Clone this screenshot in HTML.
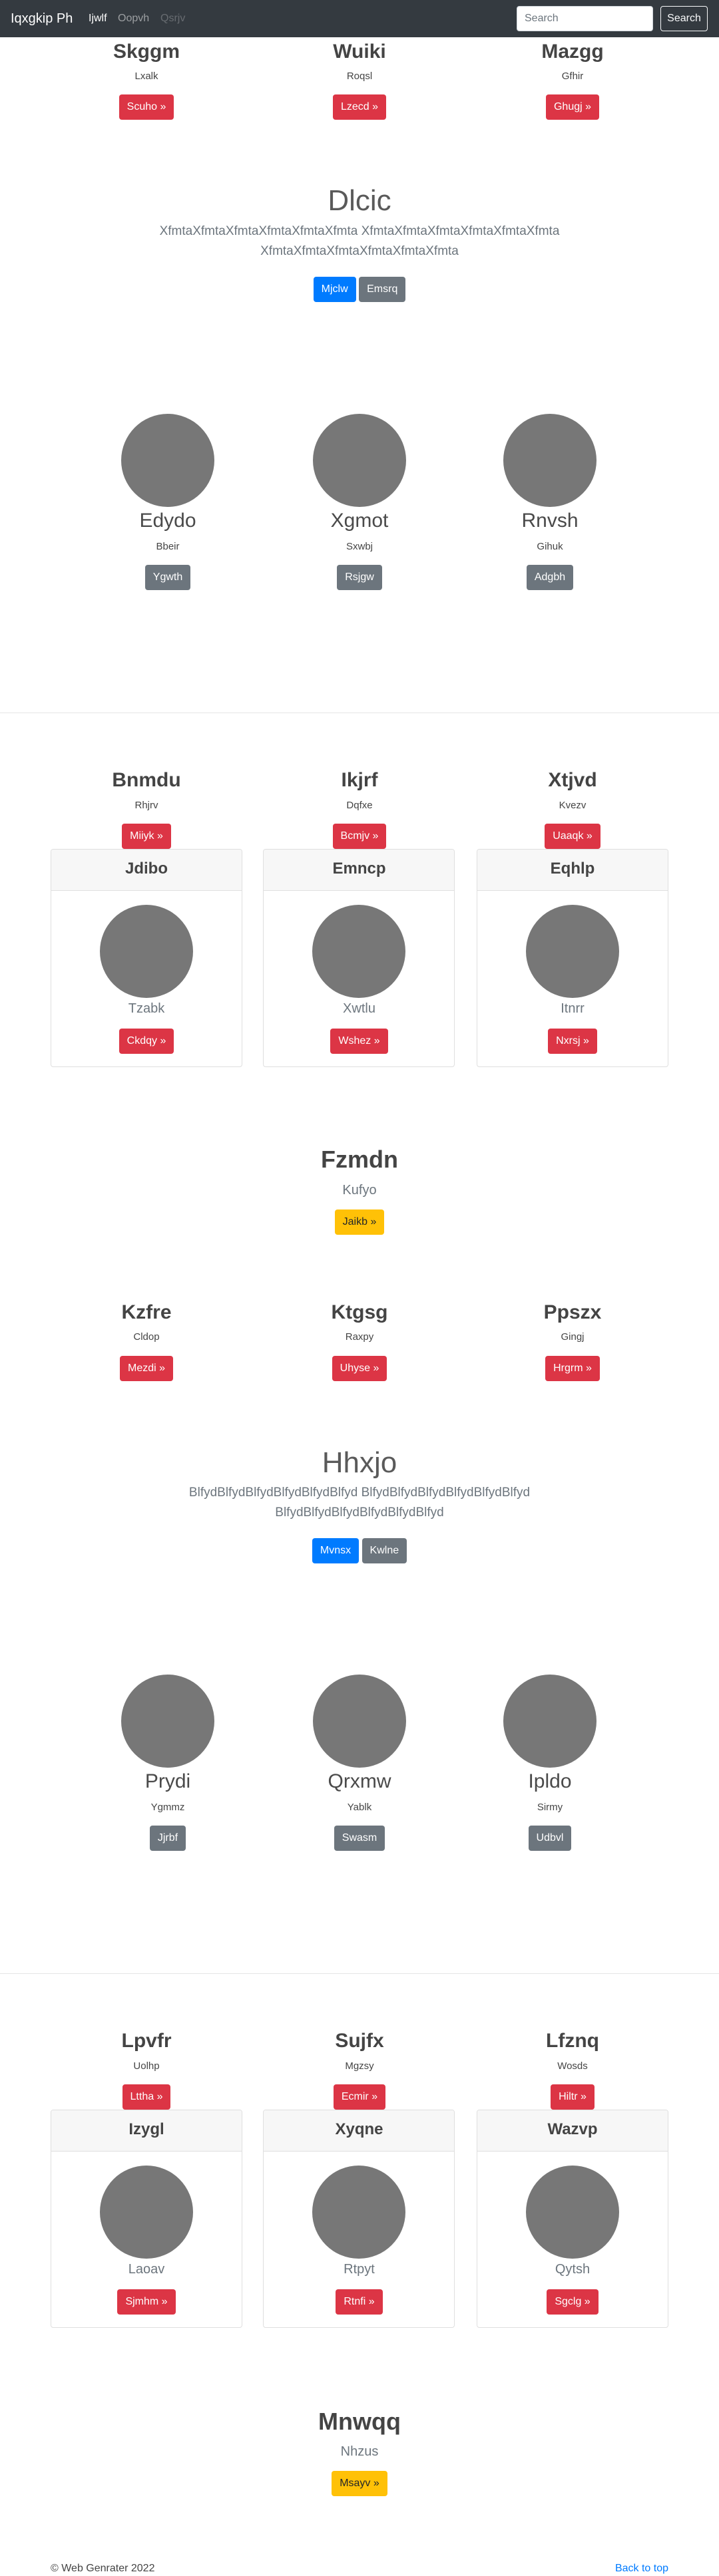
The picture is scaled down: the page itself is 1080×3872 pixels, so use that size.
<!DOCTYPE html>
<html><head><meta charset="utf-8"><style>
*{box-sizing:border-box;margin:0;padding:0}
body{width:1080px;height:3872px;position:relative;background:#fff;font-family:"Liberation Sans",sans-serif;color:#444;overflow:hidden}
.a{position:absolute;text-align:center;white-space:nowrap}
.nav{position:absolute;left:0;top:0;width:1080px;height:56px;background:#343a40}
.h{font-size:30px;line-height:36px;font-weight:bold;color:#444}
.s{font-size:15px;line-height:18px;color:#444}
.btn{display:inline-block;height:38px;line-height:38px;padding:0 12px;border-radius:4px;font-size:16px;color:#fff;vertical-align:top}
.r{background:#dc3545}.g{background:#6c757d}.bl{background:#007bff}.y{background:#ffc107;color:#212529}
.jh{font-size:44px;line-height:52px;color:#5a5a5a}
.lead{font-size:19px;line-height:30px;color:#6c757d}
.circ{position:absolute;width:140px;height:140px;border-radius:50%;background:#777}
.cn{font-size:30px;line-height:36px;color:#4a4a4a}
.card{position:absolute;width:288px;height:328px;border:1px solid #dfdfdf;border-radius:4px;overflow:hidden}
.ch{position:absolute;left:0;top:0;width:100%;height:62px;background:#f7f7f7;border-bottom:1px solid #dfdfdf}
.ct{font-size:24px;line-height:30px;font-weight:bold;color:#444}
.cs{font-size:20px;line-height:24px;color:#6c757d}
.hr{position:absolute;left:0;width:1080px;height:1px;background:#e5e5e5}
</style></head><body>
<div class="nav">
<div class="a" style="left:16px;top:16px;font-size:20px;line-height:24px;color:#fff">Iqxgkip Ph</div>
<div class="a" style="left:133px;top:18px;font-size:16px;line-height:20px;color:#fff">Ijwlf</div>
<div class="a" style="left:177px;top:18px;font-size:16px;line-height:20px;color:rgba(255,255,255,.5)">Oopvh</div>
<div class="a" style="left:241px;top:18px;font-size:16px;line-height:20px;color:rgba(255,255,255,.25)">Qsrjv</div>
<div style="position:absolute;left:776px;top:9px;width:205px;height:38px;background:#fff;border-radius:4px;border:1px solid #ced4da;font-size:16px;line-height:36px;padding-left:11px;color:#6c757d">Search</div>
<div style="position:absolute;left:992px;top:9px;width:71px;height:38px;border:1px solid #f8f9fa;border-radius:4px;font-size:16px;line-height:36px;text-align:center;color:#f8f9fa">Search</div>
</div>

<div class="a h" style="left:60px;width:320px;top:60px">Skggm</div>
<div class="a h" style="left:380px;width:320px;top:60px">Wuiki</div>
<div class="a h" style="left:700px;width:320px;top:60px">Mazgg</div>
<div class="a s" style="left:60px;width:320px;top:106px">Lxalk</div>
<div class="a s" style="left:380px;width:320px;top:106px">Roqsl</div>
<div class="a s" style="left:700px;width:320px;top:106px">Gfhir</div>
<div class="a" style="left:60px;width:320px;top:142px"><span class="btn r">Scuho »</span></div>
<div class="a" style="left:380px;width:320px;top:142px"><span class="btn r">Lzecd »</span></div>
<div class="a" style="left:700px;width:320px;top:142px"><span class="btn r">Ghugj »</span></div>

<div class="a jh" style="left:0;width:1080px;top:276px">Dlcic</div>
<div class="a lead" style="left:0;width:1080px;top:333px">XfmtaXfmtaXfmtaXfmtaXfmtaXfmta XfmtaXfmtaXfmtaXfmtaXfmtaXfmta<br>XfmtaXfmtaXfmtaXfmtaXfmtaXfmta</div>
<div class="a" style="left:0;width:1080px;top:416px"><span class="btn bl">Mjclw</span> <span class="btn g">Emsrq</span></div>

<div class="circ" style="left:182px;top:622px"></div>
<div class="circ" style="left:470px;top:622px"></div>
<div class="circ" style="left:756px;top:622px"></div>
<div class="a cn" style="left:92px;width:320px;top:765px">Edydo</div>
<div class="a cn" style="left:380px;width:320px;top:765px">Xgmot</div>
<div class="a cn" style="left:666px;width:320px;top:765px">Rnvsh</div>
<div class="a s" style="left:92px;width:320px;top:813px">Bbeir</div>
<div class="a s" style="left:380px;width:320px;top:813px">Sxwbj</div>
<div class="a s" style="left:666px;width:320px;top:813px">Gihuk</div>
<div class="a" style="left:92px;width:320px;top:849px"><span class="btn g">Ygwth</span></div>
<div class="a" style="left:380px;width:320px;top:849px"><span class="btn g">Rsjgw</span></div>
<div class="a" style="left:666px;width:320px;top:849px"><span class="btn g">Adgbh</span></div>

<div class="hr" style="top:1071px"></div>

<div class="a h" style="left:60px;width:320px;top:1155px">Bnmdu</div>
<div class="a h" style="left:380px;width:320px;top:1155px">Ikjrf</div>
<div class="a h" style="left:700px;width:320px;top:1155px">Xtjvd</div>
<div class="a s" style="left:60px;width:320px;top:1202px">Rhjrv</div>
<div class="a s" style="left:380px;width:320px;top:1202px">Dqfxe</div>
<div class="a s" style="left:700px;width:320px;top:1202px">Kvezv</div>
<div class="a" style="left:60px;width:320px;top:1238px"><span class="btn r">Miiyk »</span></div>
<div class="a" style="left:380px;width:320px;top:1238px"><span class="btn r">Bcmjv »</span></div>
<div class="a" style="left:700px;width:320px;top:1238px"><span class="btn r">Uaaqk »</span></div>

<div class="card" style="left:76px;top:1276px"><div class="ch"></div><div class="a ct" style="left:0;width:286px;top:14px">Jdibo</div><div class="circ" style="left:73px;top:83px"></div><div class="a cs" style="left:0;width:286px;top:227px">Tzabk</div><div class="a" style="left:0;width:286px;top:269px"><span class="btn r">Ckdqy »</span></div></div>
<div class="card" style="left:395px;top:1276px"><div class="ch"></div><div class="a ct" style="left:0;width:287px;top:14px">Emncp</div><div class="circ" style="left:73px;top:83px"></div><div class="a cs" style="left:0;width:287px;top:227px">Xwtlu</div><div class="a" style="left:0;width:287px;top:269px"><span class="btn r">Wshez »</span></div></div>
<div class="card" style="left:716px;top:1276px"><div class="ch"></div><div class="a ct" style="left:0;width:286px;top:14px">Eqhlp</div><div class="circ" style="left:73px;top:83px"></div><div class="a cs" style="left:0;width:286px;top:227px">Itnrr</div><div class="a" style="left:0;width:286px;top:269px"><span class="btn r">Nxrsj »</span></div></div>

<div class="a" style="left:0;width:1080px;top:1721px;font-size:36px;line-height:44px;font-weight:bold;color:#444">Fzmdn</div>
<div class="a cs" style="left:0;width:1080px;top:1777px">Kufyo</div>
<div class="a" style="left:0;width:1080px;top:1818px"><span class="btn y">Jaikb »</span></div>

<div class="a h" style="left:60px;width:320px;top:1955px">Kzfre</div>
<div class="a h" style="left:380px;width:320px;top:1955px">Ktgsg</div>
<div class="a h" style="left:700px;width:320px;top:1955px">Ppszx</div>
<div class="a s" style="left:60px;width:320px;top:2001px">Cldop</div>
<div class="a s" style="left:380px;width:320px;top:2001px">Raxpy</div>
<div class="a s" style="left:700px;width:320px;top:2001px">Gingj</div>
<div class="a" style="left:60px;width:320px;top:2038px"><span class="btn r">Mezdi »</span></div>
<div class="a" style="left:380px;width:320px;top:2038px"><span class="btn r">Uhyse »</span></div>
<div class="a" style="left:700px;width:320px;top:2038px"><span class="btn r">Hrgrm »</span></div>

<div class="a jh" style="left:0;width:1080px;top:2173px">Hhxjo</div>
<div class="a lead" style="left:0;width:1080px;top:2229px">BlfydBlfydBlfydBlfydBlfydBlfyd BlfydBlfydBlfydBlfydBlfydBlfyd<br>BlfydBlfydBlfydBlfydBlfydBlfyd</div>
<div class="a" style="left:0;width:1080px;top:2312px"><span class="btn bl">Mvnsx</span> <span class="btn g">Kwlne</span></div>

<div class="circ" style="left:182px;top:2517px"></div>
<div class="circ" style="left:470px;top:2517px"></div>
<div class="circ" style="left:756px;top:2517px"></div>
<div class="a cn" style="left:92px;width:320px;top:2660px">Prydi</div>
<div class="a cn" style="left:380px;width:320px;top:2660px">Qrxmw</div>
<div class="a cn" style="left:666px;width:320px;top:2660px">Ipldo</div>
<div class="a s" style="left:92px;width:320px;top:2708px">Ygmmz</div>
<div class="a s" style="left:380px;width:320px;top:2708px">Yablk</div>
<div class="a s" style="left:666px;width:320px;top:2708px">Sirmy</div>
<div class="a" style="left:92px;width:320px;top:2744px"><span class="btn g">Jjrbf</span></div>
<div class="a" style="left:380px;width:320px;top:2744px"><span class="btn g">Swasm</span></div>
<div class="a" style="left:666px;width:320px;top:2744px"><span class="btn g">Udbvl</span></div>

<div class="hr" style="top:2966px"></div>

<div class="a h" style="left:60px;width:320px;top:3050px">Lpvfr</div>
<div class="a h" style="left:380px;width:320px;top:3050px">Sujfx</div>
<div class="a h" style="left:700px;width:320px;top:3050px">Lfznq</div>
<div class="a s" style="left:60px;width:320px;top:3097px">Uolhp</div>
<div class="a s" style="left:380px;width:320px;top:3097px">Mgzsy</div>
<div class="a s" style="left:700px;width:320px;top:3097px">Wosds</div>
<div class="a" style="left:60px;width:320px;top:3133px"><span class="btn r">Lttha »</span></div>
<div class="a" style="left:380px;width:320px;top:3133px"><span class="btn r">Ecmir »</span></div>
<div class="a" style="left:700px;width:320px;top:3133px"><span class="btn r">Hiltr »</span></div>

<div class="card" style="left:76px;top:3171px"><div class="ch"></div><div class="a ct" style="left:0;width:286px;top:14px">Izygl</div><div class="circ" style="left:73px;top:83px"></div><div class="a cs" style="left:0;width:286px;top:227px">Laoav</div><div class="a" style="left:0;width:286px;top:269px"><span class="btn r">Sjmhm »</span></div></div>
<div class="card" style="left:395px;top:3171px"><div class="ch"></div><div class="a ct" style="left:0;width:287px;top:14px">Xyqne</div><div class="circ" style="left:73px;top:83px"></div><div class="a cs" style="left:0;width:287px;top:227px">Rtpyt</div><div class="a" style="left:0;width:287px;top:269px"><span class="btn r">Rtnfi »</span></div></div>
<div class="card" style="left:716px;top:3171px"><div class="ch"></div><div class="a ct" style="left:0;width:286px;top:14px">Wazvp</div><div class="circ" style="left:73px;top:83px"></div><div class="a cs" style="left:0;width:286px;top:227px">Qytsh</div><div class="a" style="left:0;width:286px;top:269px"><span class="btn r">Sgclg »</span></div></div>

<div class="a" style="left:0;width:1080px;top:3618px;font-size:36px;line-height:44px;font-weight:bold;color:#444">Mnwqq</div>
<div class="a cs" style="left:0;width:1080px;top:3673px">Nhzus</div>
<div class="a" style="left:0;width:1080px;top:3714px"><span class="btn y">Msayv »</span></div>

<div class="a" style="left:76px;top:3851px;font-size:16px;line-height:20px;color:#444">© Web Genrater 2022</div>
<div class="a" style="right:76px;top:3851px;font-size:16px;line-height:20px;color:#007bff">Back to top</div>
</body></html>
